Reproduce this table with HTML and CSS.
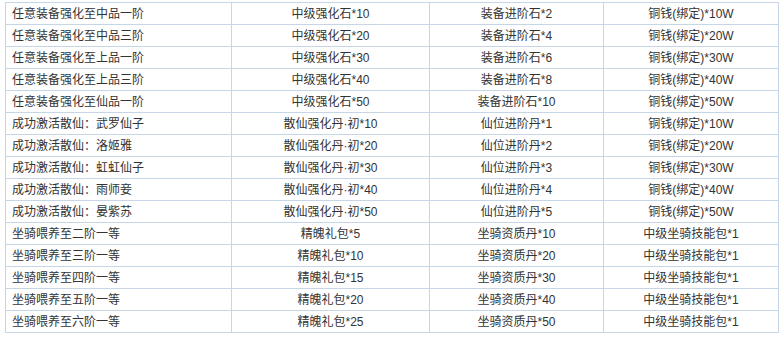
FILE: index.html
```html
<!DOCTYPE html>
<html lang="zh">
<head>
<meta charset="utf-8">
<link rel="stylesheet" href="styles.css">
</head>
<body>
<table class="reward">
<colgroup><col class="c1"><col class="c2"><col class="c3"><col class="c4"></colgroup>
<tbody>
<tr><td>任意装备强化至中品一阶</td><td>中级强化石*10</td><td>装备进阶石*2</td><td>铜钱(绑定)*10W</td></tr>
<tr><td>任意装备强化至中品三阶</td><td>中级强化石*20</td><td>装备进阶石*4</td><td>铜钱(绑定)*20W</td></tr>
<tr><td>任意装备强化至上品一阶</td><td>中级强化石*30</td><td>装备进阶石*6</td><td>铜钱(绑定)*30W</td></tr>
<tr><td>任意装备强化至上品三阶</td><td>中级强化石*40</td><td>装备进阶石*8</td><td>铜钱(绑定)*40W</td></tr>
<tr><td>任意装备强化至仙品一阶</td><td>中级强化石*50</td><td>装备进阶石*10</td><td>铜钱(绑定)*50W</td></tr>
<tr><td>成功激活散仙<span class="punct">：</span>武罗仙子</td><td>散仙强化丹·初*10</td><td>仙位进阶丹*1</td><td>铜钱(绑定)*10W</td></tr>
<tr><td>成功激活散仙<span class="punct">：</span>洛姬雅</td><td>散仙强化丹·初*20</td><td>仙位进阶丹*2</td><td>铜钱(绑定)*20W</td></tr>
<tr><td>成功激活散仙<span class="punct">：</span>虹虹仙子</td><td>散仙强化丹·初*30</td><td>仙位进阶丹*3</td><td>铜钱(绑定)*30W</td></tr>
<tr><td>成功激活散仙<span class="punct">：</span>雨师妾</td><td>散仙强化丹·初*40</td><td>仙位进阶丹*4</td><td>铜钱(绑定)*40W</td></tr>
<tr><td>成功激活散仙<span class="punct">：</span>晏紫苏</td><td>散仙强化丹·初*50</td><td>仙位进阶丹*5</td><td>铜钱(绑定)*50W</td></tr>
<tr><td>坐骑喂养至二阶一等</td><td>精魄礼包*5</td><td>坐骑资质丹*10</td><td>中级坐骑技能包*1</td></tr>
<tr><td>坐骑喂养至三阶一等</td><td>精魄礼包*10</td><td>坐骑资质丹*20</td><td>中级坐骑技能包*1</td></tr>
<tr><td>坐骑喂养至四阶一等</td><td>精魄礼包*15</td><td>坐骑资质丹*30</td><td>中级坐骑技能包*1</td></tr>
<tr><td>坐骑喂养至五阶一等</td><td>精魄礼包*20</td><td>坐骑资质丹*40</td><td>中级坐骑技能包*1</td></tr>
<tr><td>坐骑喂养至六阶一等</td><td>精魄礼包*25</td><td>坐骑资质丹*50</td><td>中级坐骑技能包*1</td></tr>
</tbody>
</table>
</body>
</html>
```
FILE: styles.css
```css
html, body {
  margin: 0;
  padding: 0;
  background: #ffffff;
}
body {
  padding: 2px 0 0 5px;
  font-family: "Liberation Sans", "Noto Sans CJK SC", sans-serif;
  font-size: 12px;
  color: #333333;
}
.reward {
  border-collapse: collapse;
  table-layout: fixed;
  width: 773px;
}
.c1 { width: 226px; }
.c2 { width: 198px; }
.c3 { width: 174px; }
.c4 { width: 175px; }
.reward td {
  border: 1px solid #c7d6e6;
  height: 21px;
  padding: 0 6px;
  line-height: 14px;
  vertical-align: middle;
  text-align: center;
  white-space: nowrap;
  overflow: hidden;
}
.reward td:first-child {
  text-align: left;
}
.punct {
  font-family: "Noto Sans CJK TC", "Noto Sans CJK SC", sans-serif;
  line-height: 12px;
}
```
